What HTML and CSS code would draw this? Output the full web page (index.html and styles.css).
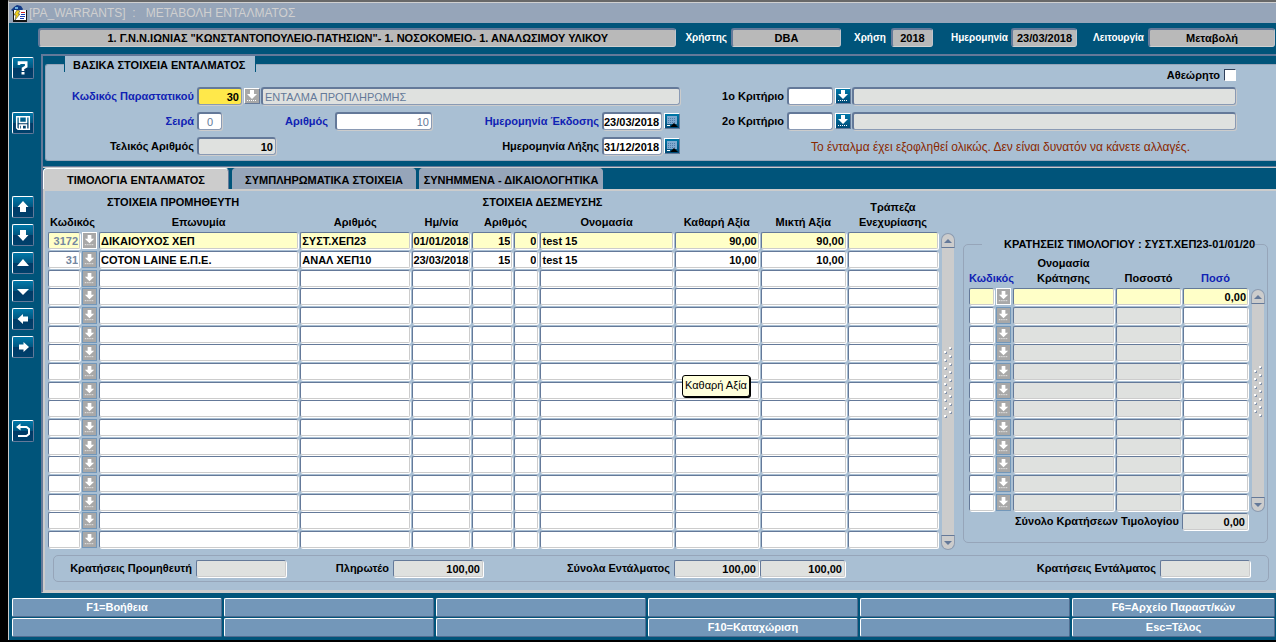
FILE: index.html
```html
<!DOCTYPE html>
<html lang="el">
<head>
<meta charset="utf-8">
<title>[PA_WARRANTS] : ΜΕΤΑΒΟΛΗ ΕΝΤΑΛΜΑΤΟΣ</title>
<link rel="stylesheet" href="styles.css">
</head>
<body>
<svg class="defs" aria-hidden="true">
  <symbol id="i-list" viewBox="0 0 14 14"><path fill="#fff" d="M5 1h4v4h3L7 10 2 5h3z"/><path stroke="#fff" stroke-dasharray="1 1" d="M2 11.500h10"/></symbol>
  <symbol id="i-cal" viewBox="0 0 14 14"><path fill="#7fa9cf" d="M2 2h10v8H2z"/><path stroke="#4f7dab" stroke-dasharray="1 1" d="M3 4.500h8M3 6.500h8M3 8.500h8"/><path fill="#000" d="M5 13l4-4 4 4z"/><path stroke="#fff" d="M2 11.500h3"/></symbol>
</svg>
<div class="window">
  <header class="titlebar">
    <svg class="app-icon" width="16" height="17" viewBox="0 0 16 17"><path fill="#123a86" d="M3 2l3-2 4 1 2 3-2 3H3L0 5z"/><path fill="#6bb0e0" d="M4 2h3v2H4z"/><path fill="#111" d="M2 5h14v12H2z"/><path fill="#fff" d="M3 5h12v10H3z"/><path fill="#f4d21c" stroke="#333" stroke-width=".5" d="M6 5l3 1-2 3h2l-5 6 1-5H3z"/><path stroke="#c22" d="M10 7.500h4"/><path stroke="#1b3bb0" d="M10 9.500h4M9 11.500h5M9 13.500h4"/></svg>
    <h1 class="title">[PA_WARRANTS] &nbsp;: &nbsp; ΜΕΤΑΒΟΛΗ ΕΝΤΑΛΜΑΤΟΣ</h1>
  </header>
  <div class="main">
    <nav class="sidebar" aria-label="Εργαλεία">
      <button class="tool" aria-label="Βοήθεια"><svg viewBox="0 0 20 20"><path fill="none" stroke="#fff" stroke-width="2.600" d="M6 7V4.600h7.200v4L10 10.500V13"/><path fill="#fff" d="M8.500 14h3v2.500h-3z"/></svg></button>
      <button class="tool tool-save" aria-label="Αποθήκευση"><svg viewBox="0 0 20 20"><path fill="none" stroke="#fff" stroke-width="1.500" d="M3.700 3.700h12.600v12.600H5l-1.300-1.300zM6.500 4v5.500h7V4M6.500 16v-4h7v4"/><path fill="#fff" d="M8 12h2v4H8z"/></svg></button>
      <button class="tool tool-nav" aria-label="Πρώτη"><svg viewBox="0 0 20 20"><path fill="#fff" d="M10 4l5.500 6H13v5H7v-5H4.500z"/></svg></button>
      <button class="tool" aria-label="Τελευταία"><svg viewBox="0 0 20 20"><path fill="#fff" d="M10 16l5.500-6H13V5H7v5H4.500z"/></svg></button>
      <button class="tool" aria-label="Πάνω"><svg viewBox="0 0 20 20"><path fill="#fff" d="M10 6l6 7H4z"/></svg></button>
      <button class="tool" aria-label="Κάτω"><svg viewBox="0 0 20 20"><path fill="#fff" d="M10 14l6-6H4z"/></svg></button>
      <button class="tool" aria-label="Προηγούμενο"><svg viewBox="0 0 20 20"><path fill="#fff" d="M4.500 10L10 5v2.500h5v5h-5V15z"/></svg></button>
      <button class="tool" aria-label="Επόμενο"><svg viewBox="0 0 20 20"><path fill="#fff" d="M16 10l-5.500-5v2.500H6v5h4.500V15z"/></svg></button>
      <button class="tool tool-exit" aria-label="Έξοδος"><svg viewBox="0 0 20 20"><path fill="none" stroke="#fff" stroke-width="2" d="M6 6h7.500l2.500 2v5l-2.500 2H5"/><path fill="#fff" d="M3 6l4.500-3.500v7z"/></svg></button>
    </nav>
    <div class="work">
      <div class="context">
        <input class="info info-org" aria-label="Φορέας" readonly value='1. Γ.Ν.Ν.ΙΩΝΙΑΣ "ΚΩΝΣΤΑΝΤΟΠΟΥΛΕΙΟ-ΠΑΤΗΣΙΩΝ"- 1. ΝΟΣΟΚΟΜΕΙΟ- 1. ΑΝΑΛΩΣΙΜΟΥ ΥΛΙΚΟΥ'>
        <label for="user">Χρήστης</label><input class="info info-user" id="user" readonly value="DBA">
        <label for="year">Χρήση</label><input class="info info-year" id="year" readonly value="2018">
        <label for="today">Ημερομηνία</label><input class="info info-date" id="today" readonly value="23/03/2018">
        <label for="mode">Λειτουργία</label><input class="info info-mode" id="mode" readonly value="Μεταβολή">
      </div>

      <section class="basic">
        <div class="basic-panel">
          <div class="basic-left">
            <h2 class="legend">ΒΑΣΙΚΑ ΣΤΟΙΧΕΙΑ ΕΝΤΑΛΜΑΤΟΣ</h2>
            <div class="row">
              <label class="first req" for="code">Κωδικός Παραστατικού</label>
              <input class="field w-code current num" id="code" value="30">
              <button class="lov lov-off" aria-label="Λίστα"><svg><use href="#i-list"/></svg></button>
              <input class="field grow ro dim" aria-label="Περιγραφή" readonly value="ΕΝΤΑΛΜΑ ΠΡΟΠΛΗΡΩΜΗΣ">
            </div>
            <div class="row">
              <label class="first req" for="series">Σειρά</label>
              <input class="field w-series dim mid" id="series" value="0">
              <label class="second req" for="number">Αριθμός</label>
              <input class="field w-number dim num" id="number" value="10">
              <label class="grow req" for="issued">Ημερομηνία Έκδοσης</label>
              <input class="field w-date" id="issued" value="23/03/2018">
              <button class="lov" aria-label="Ημερολόγιο"><svg><use href="#i-cal"/></svg></button>
            </div>
            <div class="row">
              <label class="first" for="final">Τελικός Αριθμός</label>
              <input class="field w-final ro num" id="final" readonly value="10">
              <label class="grow" for="due">Ημερομηνία Λήξης</label>
              <input class="field w-date" id="due" value="31/12/2018">
              <button class="lov" aria-label="Ημερολόγιο"><svg><use href="#i-cal"/></svg></button>
            </div>
          </div>
          <div class="basic-right">
            <div class="check-row"><label for="unapproved">Αθεώρητο</label><input class="check" type="checkbox" id="unapproved"></div>
            <div class="row">
              <label class="crit" for="crit1">1ο Κριτήριο</label>
              <input class="field w-crit" id="crit1">
              <button class="lov" aria-label="Λίστα"><svg><use href="#i-list"/></svg></button>
              <input class="field grow ro" aria-label="Περιγραφή 1ου κριτηρίου" readonly>
            </div>
            <div class="row">
              <label class="crit" for="crit2">2ο Κριτήριο</label>
              <input class="field w-crit" id="crit2">
              <button class="lov" aria-label="Λίστα"><svg><use href="#i-list"/></svg></button>
              <input class="field grow ro" aria-label="Περιγραφή 2ου κριτηρίου" readonly>
            </div>
            <p class="notice">Το ένταλμα έχει εξοφληθεί ολικώς. Δεν είναι δυνατόν να κάνετε αλλαγές.</p>
          </div>
        </div>
      </section>

      <section class="tabs">
        <div class="tabstrip" role="tablist">
          <button class="tab tab-on" role="tab" aria-selected="true">ΤΙΜΟΛΟΓΙΑ ΕΝΤΑΛΜΑΤΟΣ</button>
          <button class="tab" role="tab">ΣΥΜΠΛΗΡΩΜΑΤΙΚΑ ΣΤΟΙΧΕΙΑ</button>
          <button class="tab" role="tab">ΣΥΝΗΜΜΕΝΑ - ΔΙΚΑΙΟΛΟΓΗΤΙΚΑ</button>
        </div>
        <div class="tabpage" role="tabpanel">
          <div class="grids">
            <div class="invoices">
              <table class="grid">
                <colgroup><col class="c34"><col class="c17"><col class="c201"><col class="c112"><col class="c60"><col class="c42"><col class="c26"><col class="c134"><col class="c86"><col class="c87"><col class="c92"></colgroup>
                <thead>
                  <tr><th colspan="3">ΣΤΟΙΧΕΙΑ ΠΡΟΜΗΘΕΥΤΗ</th><th></th><th colspan="4">ΣΤΟΙΧΕΙΑ ΔΕΣΜΕΥΣΗΣ</th><th></th><th></th><th rowspan="2">Τράπεζα<br>Ενεχυρίασης</th></tr>
                  <tr><th colspan="2">Κωδικός</th><th>Επωνυμία</th><th>Αριθμός</th><th>Ημ/νία</th><th colspan="2">Αριθμός</th><th>Ονομασία</th><th>Καθαρή Αξία</th><th>Μικτή Αξία</th></tr>
                </thead>
                <tbody id="invoice-rows"></tbody>
              </table>
              <div class="scroll scroll-main"><button class="arrow arrow-up" aria-label="Πάνω"></button><div class="track"><div class="grip"></div></div><button class="arrow arrow-down" aria-label="Κάτω"></button></div>
              <div class="tooltip" role="tooltip">Καθαρή Αξία</div>
            </div>
            <fieldset class="deductions">
              <legend>ΚΡΑΤΗΣΕΙΣ ΤΙΜΟΛΟΓΙΟΥ : ΣΥΣΤ.ΧΕΠ23-01/01/20</legend>
              <div class="deduction-grid">
                <table class="grid">
                  <colgroup><col class="c27"><col class="c17"><col class="c103"><col class="c67"><col class="c67"></colgroup>
                  <thead><tr><th class="req" colspan="2">Κωδικός</th><th>Ονομασία<br>Κράτησης</th><th>Ποσοστό</th><th class="req">Ποσό</th></tr></thead>
                  <tbody id="deduction-rows"></tbody>
                </table>
                <div class="scroll scroll-side"><button class="arrow arrow-up" aria-label="Πάνω"></button><div class="track"><div class="grip"></div></div><button class="arrow arrow-down" aria-label="Κάτω"></button></div>
              </div>
              <div class="subtotal"><label for="dtotal">Σύνολο Κρατήσεων Τιμολογίου</label><input class="field thin w-sub ro num" id="dtotal" readonly value="0,00"></div>
            </fieldset>
          </div>
          <div class="totals">
            <label class="t1" for="t1">Κρατήσεις Προμηθευτή</label><input class="field thin w90 ro" id="t1" readonly>
            <label class="t2" for="t2">Πληρωτέο</label><input class="field thin w90 ro num" id="t2" readonly value="100,00">
            <label class="t3" for="t3">Σύνολα Εντάλματος</label><input class="field thin w85 ro num" id="t3" readonly value="100,00"><input class="field thin w85 ro num snug" aria-label="Σύνολο μικτής αξίας" readonly value="100,00">
            <label class="grow" for="t4">Κρατήσεις Εντάλματος</label><input class="field thin w90 ro" id="t4" readonly>
          </div>
        </div>
      </section>
    </div>
  </div>
  <footer class="keys">
    <button class="key">F1=Βοήθεια</button><button class="key" aria-label="F2"></button><button class="key" aria-label="F3"></button><button class="key" aria-label="F4"></button><button class="key" aria-label="F5"></button><button class="key">F6=Αρχείο Παραστ/κών</button>
    <button class="key" aria-label="F7"></button><button class="key" aria-label="F8"></button><button class="key" aria-label="F9"></button><button class="key">F10=Καταχώριση</button><button class="key" aria-label="F11"></button><button class="key">Esc=Τέλος</button>
  </footer>
</div>
<script src="app.js"></script>
</body>
</html>
```
FILE: styles.css
```css
* { box-sizing: border-box; }

:root {
  --teal: #00547a;
  --panel: #a9bfd3;
  --edge: #647999;
  --soft: #96a5b9;
  --face: #cccccc;
  --readonly: #dfe1df;
  --req: #1022b4;
}

body {
  margin: 0;
  background: #000;
  color: #000;
  font: bold 11px/15px "Liberation Sans", Arial, sans-serif;
}

button, input {
  margin: 0;
  padding: 0;
  border: 0;
  border-radius: 0;
  font: inherit;
  color: inherit;
}

h1, h2, p { margin: 0; font-size: inherit; }
label { white-space: nowrap; }
.defs { display: none; }
.grow { flex: 1; min-width: 0; }
.req { color: var(--req); }

.window {
  margin-left: 8px;
  background: var(--teal);
  border-top: 2px solid #686868;
  border-left: 1px solid var(--face);
}

/* Title bar */
.titlebar {
  display: flex;
  align-items: center;
  height: 21px;
  padding-left: 2px;
  background: var(--soft);
  border-top: 1px solid #d0d0d0;
}
.title {
  margin-left: 2px;
  color: #d0d0d0;
  font-size: 12px;
  font-weight: normal;
}

.main { display: flex; }

/* Toolbar */
.sidebar {
  display: flex;
  flex-direction: column;
  gap: 6px;
  width: 29px;
  padding: 34px 0 0 3px;
}
.tool {
  width: 22px;
  height: 22px;
  border: 1px solid #fff;
  border-right-color: var(--edge);
  border-bottom-color: var(--edge);
  border-radius: 2px;
  background: linear-gradient(#0078a8, #00557f 50%, #003a66 52%, #00416c);
}
.tool svg { display: block; width: 20px; height: 20px; }
.tool-save { margin-top: 27px; }
.tool-nav { margin-top: 56px; }
.tool-exit { margin-top: 56px; }

.work { flex: 1; min-width: 0; }

/* Context line */
.context {
  display: flex;
  align-items: center;
  padding: 5px 1px 7px 0;
  color: #fff;
}
.context label { font-size: 10px; }
.info {
  height: 19px;
  border: 2px solid var(--edge);
  border-right: 1px solid #c0c4cc;
  border-bottom: 1px solid #d0d0d0;
  border-radius: 3px;
  background: #b9b9b9;
  color: #000;
  text-align: center;
}
.info-org { flex: 1; min-width: 0; margin-right: 9px; }
.info-user { width: 110px; margin: 0 13px 0 4px; }
.info-year { width: 42px; margin: 0 18px 0 5px; }
.info-date { width: 66px; margin: 0 16px 0 3px; }
.info-mode { width: 127px; margin-left: 4px; }

/* Basic data */
.basic {
  margin-left: 3px;
  padding: 8px 0 5px 2px;
  border-top: 2px solid var(--edge);
  border-left: 2px solid var(--edge);
}
.basic-panel {
  display: flex;
  background: var(--panel);
  border: 1px solid var(--soft);
  border-right: 0;
  border-radius: 3px 0 0 3px;
  padding-bottom: 3px;
}
.basic-left {
  display: flex;
  flex-direction: column;
  gap: 7px;
  width: 634px;
}
.legend {
  width: 192px;
  height: 16px;
  margin: -9px 0 8px 18px;
  padding-left: 8px;
  line-height: 18px;
  background: var(--panel);
  border: solid var(--teal);
  border-width: 0 1px;
}
.basic-right {
  display: flex;
  flex: 1;
  flex-direction: column;
  gap: 7px;
  min-width: 0;
  padding: 4px 40px 0 41px;
}
.row {
  display: flex;
  align-items: center;
  height: 18px;
}
.row label { text-align: right; }
.row .first { width: 148px; }
.row .second { width: 106px; margin-right: 4px; }
.row .crit { width: 63px; }

.field {
  height: 18px;
  margin-left: 3px;
  padding: 0 2px;
  border: 2px solid var(--edge);
  border-right: 1px solid #8a9ab4;
  border-bottom: 1px solid #8a9ab4;
  border-radius: 3px;
  background: #fff;
  box-shadow: 1px 1px 0 var(--face);
}
.thin {
  height: 17px;
  border-top-width: 1px;
  border-left-width: 1px;
  border-right-color: var(--face);
  border-bottom-color: var(--face);
  border-radius: 2px;
  box-shadow: 1px 1px 0 #fff;
}
.ro { background: var(--readonly); }
.current { background: #ffe84a; }
.dim { color: var(--edge); font-weight: normal; }
.num { text-align: right; }
.mid { text-align: center; }
.w-code { width: 45px; }
.w-series { width: 25px; }
.w-number { width: 97px; }
.w-date { width: 60px; padding: 0; }
.w-final { width: 79px; }
.w-crit { width: 46px; }
.w-sub { width: 66px; }
.w90 { width: 90px; }
.w85 { width: 85px; }

.lov {
  flex: none;
  width: 16px;
  height: 16px;
  margin-left: 2px;
  border: 1px solid #fff;
  border-right-color: var(--edge);
  border-bottom-color: var(--edge);
  background: linear-gradient(#0078a8, #004a76);
}
.lov svg { display: block; width: 14px; height: 14px; }
.lov-off { background: #a8a8a8; }
.lov + .field { margin-left: 1px; }

.check-row {
  display: flex;
  align-items: center;
  justify-content: flex-end;
  gap: 4px;
  height: 12px;
  margin-bottom: -1px;
}
.check {
  width: 12px;
  height: 12px;
  appearance: none;
  border: 1px solid #30405a;
  border-right-color: #fff;
  border-bottom-color: #fff;
  background: #fff;
}
.notice {
  padding-right: 46px;
  color: #8a2800;
  font-size: 12px;
  font-weight: normal;
  line-height: 20px;
  text-align: right;
  white-space: nowrap;
}

/* Tabs */
.tabs {
  margin-left: 3px;
  border-left: 2px solid var(--edge);
  border-top: 1px solid var(--edge);
  border-bottom: 1px solid var(--face);
}
.tabstrip {
  display: flex;
  gap: 3px;
  border-top: 1px solid var(--face);
}
.tab {
  height: 21px;
  padding: 3px 0 0;
  width: 184px;
  border: 1px solid var(--soft);
  border-bottom: 0;
  border-radius: 4px 4px 0 0;
  background: var(--soft);
}
.tab-on {
  width: 186px;
  background: var(--face);
  border-color: #fff var(--edge) var(--face) #fff;
}
.tabpage {
  padding: 1px 8px 8px 3px;
  background: var(--panel);
  border: solid var(--face);
  border-width: 2px 0 2px 2px;
}

.grids { display: flex; align-items: flex-start; gap: 8px; }
.invoices {
  position: relative;
  display: flex;
  flex: 1;
  align-items: flex-end;
  min-width: 0;
}
.grid {
  flex: 1;
  width: 100%;
  min-width: 0;
  table-layout: fixed;
  border-collapse: separate;
  border-spacing: 0;
}
.grid th {
  height: 20px;
  padding: 0 2px 2px 0;
  line-height: 15px;
  vertical-align: bottom;
  white-space: nowrap;
}
.grid td { height: 19px; padding: 0 2px 0 0; vertical-align: top; }
.grid tr:nth-child(3n) td { height: 18px; }
.c17 { width: 17px; }
.c26 { width: 26px; }
.c27 { width: 27px; }
.c34 { width: 34px; }
.c42 { width: 42px; }
.c60 { width: 60px; }
.c67 { width: 67px; }
.c86 { width: 86px; }
.c87 { width: 87px; }
.c92 { width: 92px; }
.c103 { width: 103px; }
.c112 { width: 112px; }
.c134 { width: 134px; }
.c201 { width: 201px; }

.cell {
  display: block;
  width: 100%;
  height: 17px;
  padding: 0 1px;
  border: 1px solid var(--edge);
  border-right-color: var(--face);
  border-bottom-color: var(--face);
  border-radius: 2px;
  background: #fff;
  box-shadow: 1px 1px 0 #fff;
}
.cell.flush { padding: 0; }
.cell.ro { background: var(--readonly); }
.cell.dim { font-weight: bold; color: #7487a0; }
.selected .cell, .selected .cell.ro { background: #ffffc8; }
.grid .lov {
  display: block;
  width: 15px;
  height: 17px;
  margin: 0;
  border: 1px solid #7397b9;
  background: #a8a8a8;
}
.grid .lov svg { width: 13px; height: 15px; }
.grid .selected .lov { border-color: #fff; }

.scroll {
  display: flex;
  flex: none;
  flex-direction: column;
  width: 14px;
}
.scroll-main { height: 317px; margin-left: 1px; }
.scroll-side { height: 223px; margin-left: 1px; }
.arrow {
  height: 15px;
  border: 1px solid #8c9bb0;
  background: var(--face);
}
.arrow::before {
  content: "";
  display: block;
  width: 0;
  margin: 0 auto;
  border: 4px solid transparent;
}
.arrow-up { border-radius: 7px 7px 0 0; border-bottom-color: var(--edge); }
.arrow-up::before { border-top: 0; border-bottom-color: var(--edge); }
.arrow-down { border-radius: 0 0 7px 7px; border-top-color: var(--edge); }
.arrow-down::before { border-bottom: 0; border-top-color: var(--edge); }
.track {
  display: flex;
  flex: 1;
  align-items: center;
  margin: 0 1px;
  padding-bottom: 20px;
  background: var(--face);
}
.grip {
  width: 10px;
  height: 72px;
  margin-left: 1px;
  background:
    radial-gradient(circle at 2px 6px, #fff 1px, transparent 1px),
    radial-gradient(circle at 7px 2px, #fff 1px, transparent 1px),
    radial-gradient(circle at 3px 7px, #8595ad 1px, transparent 1px),
    radial-gradient(circle at 8px 3px, #8595ad 1px, transparent 1px);
  background-size: 10px 8px;
}
.scroll-side .grip { height: 52px; }

.tooltip {
  position: absolute;
  left: 634px;
  top: 183px;
  padding: 2px 2px 3px;
  border: 1px solid #000;
  border-radius: 3px;
  background: #ffffdc;
  box-shadow: 1px 1px 0 #000;
  font-weight: normal;
}

.deductions {
  flex: none;
  width: 305px;
  min-width: 0;
  margin: 45px 0 0;
  padding: 0 2px 12px 5px;
  border: 1px solid var(--soft);
  border-radius: 5px;
}
.deductions legend {
  margin-left: 13px;
  padding: 0 0 0 22px;
  white-space: nowrap;
}
.deduction-grid { display: flex; align-items: flex-end; }
.deductions th { height: 36px; }
.subtotal {
  display: flex;
  align-items: center;
  justify-content: flex-end;
  margin: 1px 17px 0 0;
}

.totals {
  display: flex;
  align-items: center;
  height: 27px;
  margin: 5px -1px 0 5px;
  padding-right: 18px;
  border: 1px solid var(--soft);
  border-radius: 5px;
}
.totals label { margin-right: 1px; text-align: right; }
.t1 { width: 138px; }
.t2 { width: 103px; }
.t3 { width: 187px; }
.snug { margin-left: 1px; }

/* Function keys */
.keys {
  display: grid;
  grid-template-columns: repeat(5, 210fr) 203fr;
  gap: 1px 2px;
  padding: 5px 1px 2px 3px;
  border-bottom: 1px solid var(--teal);
}
.key {
  height: 19px;
  border: 1px solid #fff;
  border-right-color: #506c90;
  border-bottom-color: #506c90;
  border-radius: 2px;
  background: #7397b9;
  color: #fff;
}
```
FILE: app.js
```js
const LOV = '<button class="lov" aria-label="Λίστα"><svg><use href="#i-list"/></svg></button>';

function fill(id, count, columns, data) {
  let html = '';
  for (let r = 0; r < count; r++) {
    html += '<tr' + (r === 0 ? ' class="selected"' : '') + '>';
    columns.forEach((col, c) => {
      if (col === null) {
        html += '<td>' + LOV + '</td>';
      } else {
        const value = (data[r] && data[r][c]) || '';
        html += '<td><input class="cell ' + col[1] + '" aria-label="' + col[0] + '" value="' + value + '"></td>';
      }
    });
    html += '</tr>';
  }
  document.getElementById(id).innerHTML = html;
}

fill('invoice-rows', 17, [
  ['Κωδικός', 'num dim'], null, ['Επωνυμία', ''], ['Αριθμός', ''], ['Ημ/νία', 'flush'],
  ['Αριθμός δέσμευσης', 'num'], ['Αύξων', 'num'], ['Ονομασία', ''],
  ['Καθαρή Αξία', 'num'], ['Μικτή Αξία', 'num'], ['Τράπεζα Ενεχυρίασης', '']
], [
  ['3172', '', 'ΔΙΚΑΙΟΥΧΟΣ ΧΕΠ', 'ΣΥΣΤ.ΧΕΠ23', '01/01/2018', '15', '0', 'test 15', '90,00', '90,00', ''],
  ['31', '', 'COTON LAINE Ε.Π.Ε.', 'ΑΝΑΛ ΧΕΠ10', '23/03/2018', '15', '0', 'test 15', '10,00', '10,00', '']
]);

fill('deduction-rows', 12, [
  ['Κωδικός', ''], null, ['Ονομασία Κράτησης', 'ro'], ['Ποσοστό', 'ro'], ['Ποσό', 'num']
], [['', '', '', '', '0,00']]);
```
